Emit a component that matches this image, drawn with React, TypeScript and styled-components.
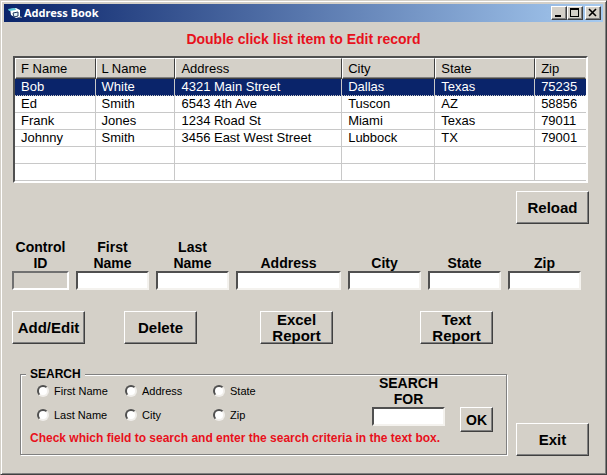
import React, { useState } from "react";
import styled, { createGlobalStyle } from "styled-components";

const face = "#d4d0c8";
const raised = "#fff #404040 #404040 #fff";

const GlobalStyle = createGlobalStyle`
  * { box-sizing: border-box; }
  html, body { margin: 0; }
  body { background: ${face}; }
  body, input, button { font-family: "Liberation Sans", Arial, sans-serif; color: #000; }
`;

const Window = styled.div`
  min-height: 100vh;
  padding: 2px;
  background: ${face};
  border: 1px solid;
  border-color: ${face} #404040 #404040 ${face};
  box-shadow: inset 1px 1px #fff, inset -1px -1px #808080;
`;

const TitleBar = styled.header`
  display: flex;
  align-items: center;
  height: 18px;
  margin: 1px;
  padding: 0 2px 0 4px;
  background: linear-gradient(90deg, #0a246a, #a6caf0);
`;

const AppIcon = styled.svg`
  width: 14px;
  height: 12px;
  margin-right: 2px;
`;

const Title = styled.h1`
  flex: 1;
  margin: 0;
  font: bold 11px/16px "Noto Sans", Tahoma, sans-serif;
  color: #fff;
`;

const CaptionButtons = styled.div`
  display: flex;
`;

const CaptionButton = styled.button<{ $spaced?: boolean }>`
  display: flex;
  width: 16px;
  height: 14px;
  margin-left: ${(p) => (p.$spaced ? 2 : 0)}px;
  padding: 0;
  background: ${face};
  border: 1px solid;
  border-color: ${raised};
  box-shadow: inset -1px -1px #808080;
`;

const Client = styled.main`
  padding: 8px 15px 14px 9px;
`;

const Hint = styled.p`
  margin: 0 -6px 9px 0;
  font-size: 14px;
  line-height: 16px;
  font-weight: bold;
  text-align: center;
  color: #e8101c;
`;

const ListFrame = styled.div`
  margin: 0 1px 8px;
  border: 2px solid;
  border-color: #505050 #fff #fff #505050;
  background: #fff;
`;

const RecordTable = styled.table`
  width: 100%;
  table-layout: fixed;
  border-collapse: separate;
  border-spacing: 0;
  font-size: 13px;
  line-height: 16px;
`;

const Col = styled.col<{ $share: number }>`
  width: ${(p) => p.$share}%;
`;

const HeadCell = styled.th`
  height: 21px;
  padding: 0 0 0 5px;
  text-align: left;
  font-weight: normal;
  background: ${face};
  border: 1px solid;
  border-color: #fff #404040 #404040 #fff;
  box-shadow: inset 0 -1px #808080;

  &:last-child { border-right-color: ${face}; }
`;

const Row = styled.tr<{ $selected?: boolean }>`
  color: ${(p) => (p.$selected ? "#fff" : "#000")};
  background: ${(p) => (p.$selected ? "#0a246a" : "#fff")};
  cursor: default;

  td { border-bottom-style: ${(p) => (p.$selected ? "dotted" : "solid")}; }
`;

const Cell = styled.td`
  height: 17px;
  padding: 0 0 0 6px;
  white-space: nowrap;
  border: 0 solid #c8c8c8;
  border-bottom-width: 1px;
  box-shadow: inset -1px 0 #c8c8c8;

  &:last-child { box-shadow: none; }
`;

const Button = styled.button<{ $compact?: boolean }>`
  width: ${(p) => (p.$compact ? 33 : 73)}px;
  height: ${(p) => (p.$compact ? 25 : 33)}px;
  padding: 0;
  font-size: ${(p) => (p.$compact ? 14 : 15)}px;
  line-height: 16px;
  font-weight: bold;
  background: ${face};
  border: 1px solid;
  border-color: ${raised};
  box-shadow: inset -1px -1px #808080;
`;

const ReloadBar = styled.div`
  display: flex;
  justify-content: flex-end;
  margin-bottom: 15px;
`;

const Fields = styled.div`
  display: grid;
  grid-template-columns: 57fr 73fr 73fr 105fr 73fr 73fr 73fr;
  gap: 7px;
  align-items: end;
  margin: 0 8px 21px 0;
`;

const Field = styled.label`
  display: flex;
  flex-direction: column;
  font-size: 14px;
  line-height: 16px;
  font-weight: bold;
  text-align: center;
`;

const Caption = styled.span`
  align-self: center;
  white-space: pre-line;
`;

const TextBox = styled.input`
  width: 100%;
  min-width: 0;
  height: 19px;
  padding: 0 2px;
  font-size: 12px;
  background: #fff;
  border: 2px solid;
  border-color: #505050 #f4f2ee #f4f2ee #505050;
  border-radius: 0;
  outline: none;

  &:read-only {
    background: ${face};
    border-color: #707070 #fff #fff #707070;
  }
`;

const Actions = styled.div`
  display: grid;
  grid-template-columns: 112fr 136fr 160fr 169fr;
  margin-bottom: 23px;
`;

const Bottom = styled.div`
  display: flex;
  align-items: flex-end;
  gap: 8px;
  padding-left: 8px;
`;

const SearchGroup = styled.fieldset`
  flex: 1;
  min-width: 0;
  margin: 0 1px 1px 0;
  padding: 0 13px 10px 9px;
  border: 1px solid #808080;
  box-shadow: 1px 1px #fff, inset 1px 1px #fff;
`;

const Legend = styled.legend`
  margin-left: -4px;
  padding: 0 4px;
  font-size: 12px;
  line-height: 14px;
  font-weight: bold;
  background: ${face};
`;

const SearchGrid = styled.div`
  display: grid;
  grid-template-columns: 1fr 73px 33px;
  column-gap: 15px;
  margin-top: -6px;
`;

const Choices = styled.div`
  display: grid;
  grid-template-columns: repeat(3, 88px);
  grid-auto-rows: 24px;
  align-self: end;
  padding: 4px 0 5px 7px;
`;

const Choice = styled.label`
  display: flex;
  align-items: center;
  gap: 5px;
  font-size: 11px;
  line-height: 14px;
  white-space: nowrap;
`;

const Radio = styled.input`
  appearance: none;
  width: 12px;
  height: 12px;
  margin: 0;
  background: #fff;
  border: 2px solid;
  border-color: #505050 #f0eeea #f0eeea #505050;
  border-radius: 50%;

  &:checked { background: radial-gradient(#000 2px, #fff 3px); }
`;

const OkSlot = styled.div`
  display: flex;
  align-self: end;
`;

const SearchNote = styled.p`
  grid-column: 1 / -1;
  margin: 0;
  font-size: 12px;
  line-height: 12px;
  font-weight: bold;
  white-space: nowrap;
  color: #e8101c;
`;

const columns = [
  { name: "F Name", share: 14.1 },
  { name: "L Name", share: 14 },
  { name: "Address", share: 29.2 },
  { name: "City", share: 16.3 },
  { name: "State", share: 17.5 },
  { name: "Zip", share: 8.9 },
];

const records = [
  ["Bob", "White", "4321 Main Street", "Dallas", "Texas", "75235"],
  ["Ed", "Smith", "6543 4th Ave", "Tuscon", "AZ", "58856"],
  ["Frank", "Jones", "1234 Road St", "Miami", "Texas", "79011"],
  ["Johnny", "Smith", "3456 East West Street", "Lubbock", "TX", "79001"],
  ["", "", "", "", "", ""],
  ["", "", "", "", "", ""],
];

const fields = ["Control\nID", "First\nName", "Last\nName", "Address", "City", "State", "Zip"];
const choices = ["First Name", "Address", "State", "Last Name", "City", "Zip"];

export default function App() {
  const [selected, setSelected] = useState(0);

  return (
    <>
      <GlobalStyle />
      <Window>
        <TitleBar>
          <AppIcon viewBox="0 0 14 12" aria-hidden="true">
            <path d="M2 2l6-1 4 2v7l-4 1-5-3z" fill="#fff" />
            <path d="M0 2l7-1 1 2-7 1z" fill="#58c8d8" />
            <path d="M5 6l5-1v4l-4 1z" fill="#e8f4f8" stroke="#203860" />
            <path d="M12 9l2 1v1h-3z" fill="#808890" />
          </AppIcon>
          <Title>Address Book</Title>
          <CaptionButtons>
            <CaptionButton aria-label="Minimize">
              <svg width="14" height="12"><path d="M3 8h6v2H3z" /></svg>
            </CaptionButton>
            <CaptionButton aria-label="Maximize">
              <svg width="14" height="12"><path d="M2 1h9v9H2zM3 3v6h7V3z" fillRule="evenodd" /></svg>
            </CaptionButton>
            <CaptionButton aria-label="Close" $spaced>
              <svg width="14" height="12"><path d="M3 2l7 7M10 2L3 9" stroke="#000" strokeWidth="1.6" /></svg>
            </CaptionButton>
          </CaptionButtons>
        </TitleBar>

        <Client>
          <Hint>Double click list item to Edit record</Hint>
          <ListFrame>
            <RecordTable>
              <colgroup>
                {columns.map((c) => <Col key={c.name} $share={c.share} />)}
              </colgroup>
              <thead>
                <tr>{columns.map((c) => <HeadCell key={c.name}>{c.name}</HeadCell>)}</tr>
              </thead>
              <tbody>
                {records.map((record, i) => (
                  <Row key={i} $selected={i === selected} onClick={() => setSelected(i)}>
                    {record.map((value, j) => <Cell key={j}>{value}</Cell>)}
                  </Row>
                ))}
              </tbody>
            </RecordTable>
          </ListFrame>

          <ReloadBar><Button>Reload</Button></ReloadBar>

          <Fields>
            {fields.map((name, i) => (
              <Field key={name}>
                <Caption>{name}</Caption>
                <TextBox type="text" readOnly={i === 0} />
              </Field>
            ))}
          </Fields>

          <Actions>
            <Button>Add/Edit</Button>
            <Button>Delete</Button>
            <Button>Excel Report</Button>
            <Button>Text Report</Button>
          </Actions>

          <Bottom>
            <SearchGroup>
              <Legend>SEARCH</Legend>
              <SearchGrid>
                <Choices>
                  {choices.map((name) => (
                    <Choice key={name}>
                      <Radio type="radio" name="search-field" value={name} />
                      {name}
                    </Choice>
                  ))}
                </Choices>
                <Field>
                  <Caption>{"SEARCH\nFOR"}</Caption>
                  <TextBox type="text" />
                </Field>
                <OkSlot><Button $compact>OK</Button></OkSlot>
                <SearchNote>
                  Check which field to search and enter the search criteria in the text box.
                </SearchNote>
              </SearchGrid>
            </SearchGroup>
            <Button>Exit</Button>
          </Bottom>
        </Client>
      </Window>
    </>
  );
}
